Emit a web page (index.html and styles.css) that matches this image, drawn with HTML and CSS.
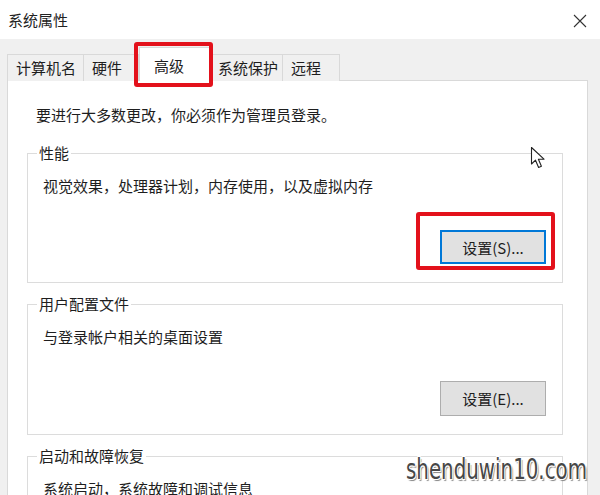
FILE: index.html
```html
<!DOCTYPE html>
<html lang='zh-CN'>
    <head>
        <meta charset='UTF-8'>
        <title>系统属性</title>
        <link rel="stylesheet" href="styles.css">
    </head>
    <body>
        <div class='titlebar'>
            <span class='title'>系统属性</span>
            <svg class='close' width='16' height='16' viewBox='0 0 16 16'>
                <path d='M2 2 L14 14 M14 2 L2 14' stroke='#333' stroke-width='1.1' fill='none'/>
            </svg>
        </div>

        <div class='tabs'>
            <div class='tab tab-name'>计算机名</div>
            <div class='tab tab-hw'>硬件</div>
            <div class='tab tab-adv active marked'>高级</div>
            <div class='tab tab-protect'>系统保护</div>
            <div class='tab tab-remote'>远程</div>
        </div>

        <div class='panel'>
            <p class='intro'>要进行大多数更改，你必须作为管理员登录。</p>

            <fieldset class='group'>
                <legend>性能</legend>
                <p class='desc'>视觉效果，处理器计划，内存使用，以及虚拟内存</p>
                <div class='actions'>
                    <button class='btn focused marked'>设置(S)...</button>
                </div>
            </fieldset>

            <fieldset class='group'>
                <legend>用户配置文件</legend>
                <p class='desc'>与登录帐户相关的桌面设置</p>
                <div class='actions'>
                    <button class='btn'>设置(E)...</button>
                </div>
            </fieldset>

            <fieldset class='group'>
                <legend>启动和故障恢复</legend>
                <p class='desc'>系统启动，系统故障和调试信息</p>
                <div class='actions'>
                    <button class='btn'>设置(T)...</button>
                </div>
            </fieldset>
        </div>

        <!-- mouse pointer -->
        <svg class='pointer' width='18' height='24' viewBox='0 0 18 24'>
            <path d='M1.5 1.5 L1.5 18 L5.5 14.2 L8.6 21.5 L11.4 20.3 L8.4 13.2 L14 13.2 Z' fill='#fff' stroke='#222' stroke-width='1.1' stroke-linejoin='round'/>
        </svg>

        <div class='watermark'>shenduwin10.com</div>
    </body>
</html>
```

FILE: styles.css
```css
html, body {
    margin: 0;
    height: 100%;
    overflow: hidden;
}
body {
    background-color: #f0f0f0;
    font-family: "Noto Sans CJK SC", "Microsoft YaHei", sans-serif;
    font-size: 15px;
    color: #1e1e1e;
    position: relative;
}
p {
    margin: 0;
    line-height: 20px;
}

.titlebar {
    height: 39px;
    background-color: #fff;
    display: flex;
    align-items: center;
    justify-content: space-between;
    padding: 0 12px 0 8px;
}
.title {
    font-size: 15px;
    color: #222;
}
.close {
    margin-top: 2px;
}

/* tab strip */
.tabs {
    display: flex;
    align-items: flex-end;
    padding-left: 7px;
    margin-top: 8px;
    margin-bottom: -1px;
    position: relative;
    z-index: 1;
}
.tab {
    box-sizing: border-box;
    height: 27px;
    line-height: 26px;
    padding-left: 8px;
    background-color: #f0f0f0;
    border: 1px solid #d9d9d9;
    border-bottom: none;
    margin-left: -1px;
    white-space: nowrap;
}
.tab:first-child {
    margin-left: 0;
}
.tab-name { width: 77px; }
.tab-hw { width: 56px; }
.tab-adv { width: 72px; }
.tab-protect { width: 72px; padding-left: 6px; }
.tab-remote { width: 58px; }
.tab.active {
    height: 34px;
    line-height: 36px;
    background-color: #fff;
    padding-left: 14px;
    margin-left: 0;
    margin-right: 1px;
    position: relative;
}

/* red annotation frames */
.marked {
    position: relative;
}
.marked::after {
    content: '';
    position: absolute;
    border: 4px solid #e3111b;
    border-radius: 3px;
    pointer-events: none;
}
.tab.marked::after {
    left: -6px;
    top: -6px;
    right: -3px;
    bottom: -6px;
}
.btn.marked::after {
    left: -26px;
    top: -20px;
    right: -11px;
    bottom: -8px;
}

/* main page */
.panel {
    box-sizing: border-box;
    width: 581px;
    margin-left: 7px;
    min-height: 500px;
    background-color: #fff;
    border: 1px solid #d9d9d9;
    padding: 24px 24px 0 19px;
}
.intro {
    padding-left: 9px;
    margin-bottom: 18px;
}
.group {
    margin: 0 0 11px 0;
    padding: 13px 16px 18px 15px;
    border: 1px solid #dcdcdc;
}
.group legend {
    padding: 0 2px;
    margin-left: -6px;
    line-height: 20px;
}
.desc {
    margin-bottom: 34px;
}
.actions {
    display: flex;
    justify-content: flex-end;
}
.btn {
    box-sizing: border-box;
    width: 106px;
    height: 35px;
    font-family: inherit;
    font-size: 15px;
    color: #1e1e1e;
    background-color: #e1e1e1;
    border: 1px solid #adadad;
    padding: 0;
}
.btn.focused {
    height: 34px;
    border: 2px solid #0078d7;
}

/* overlays */
.pointer {
    position: absolute;
    left: 530px;
    top: 146px;
}
.watermark {
    position: absolute;
    left: 406px;
    top: 452px;
    font-family: "DejaVu Sans Condensed", "DejaVu Sans", sans-serif;
    font-size: 29px;
    color: #474747;
    transform: scaleX(0.76);
    transform-origin: left top;
    white-space: nowrap;
    text-shadow: -1px -1px 0 #fff, 1px -1px 0 #fff, -1px 1px 0 #fff, 1px 1px 0 #fff, 2px 2px 1px #888;
}
```
